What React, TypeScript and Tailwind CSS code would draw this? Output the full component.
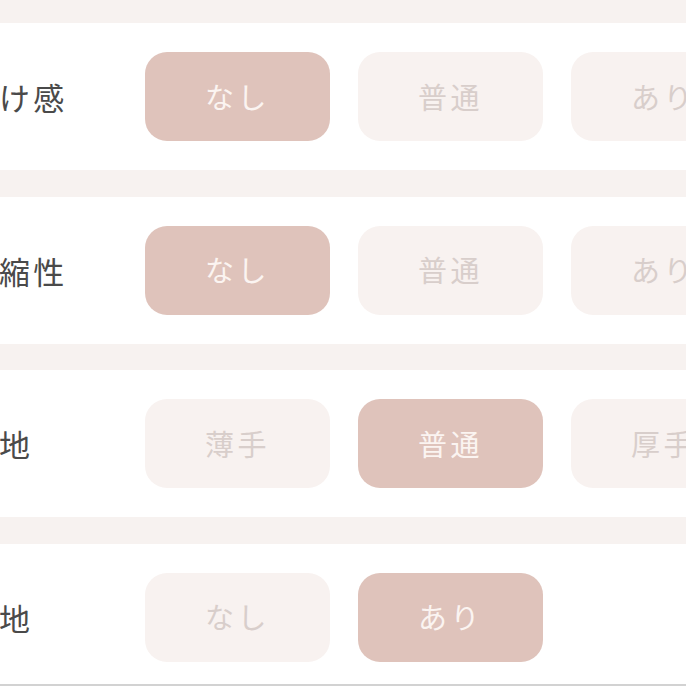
import React from "react";

type Row = { label: string; options: string[]; selected: number };

const rows: Row[] = [
  { label: "透け感", options: ["なし", "普通", "あり"], selected: 0 },
  { label: "伸縮性", options: ["なし", "普通", "あり"], selected: 0 },
  { label: "生地", options: ["薄手", "普通", "厚手"], selected: 1 },
  { label: "裏地", options: ["なし", "あり"], selected: 1 },
];

const font = { fontFamily: '"Noto Sans CJK JP", "Noto Sans", sans-serif' };

export default function App() {
  return (
    <div className="w-[686px] h-[686px] overflow-hidden bg-[#f7f2f0] relative" style={font}>
      <div className="h-[23px]" />
      {rows.map((row, i) => (
        <div key={i}>
          {i > 0 && <div className="h-[26.5px]" />}
          <div className="h-[147px] bg-white flex items-center ml-[-35px]">
            <div className="w-[180px] shrink-0 text-[31px] tracking-[0.1em] text-[#4a4a4a] leading-none">
              {row.label}
            </div>
            <div className="flex gap-[28px] shrink-0">
              {row.options.map((opt, j) => (
                <div
                  key={j}
                  className={
                    j === row.selected
                      ? "w-[185px] h-[89px] rounded-[22px] bg-[#dfc3bb] text-[#fbf4f1] flex items-center justify-center text-[29px] tracking-[0.12em] shrink-0"
                      : "w-[185px] h-[89px] rounded-[22px] bg-[#f8f2f0] text-[#d8cecb] flex items-center justify-center text-[29px] tracking-[0.12em] shrink-0"
                  }
                >
                  {opt}
                </div>
              ))}
            </div>
          </div>
        </div>
      ))}
      <div className="absolute bottom-0 left-0 right-0 h-[2px] bg-[#d2d2d2]" />
    </div>
  );
}
